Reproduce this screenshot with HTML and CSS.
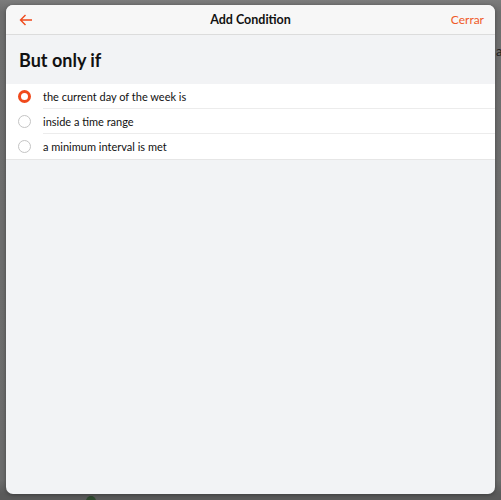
FILE: index.html
```html
<!DOCTYPE HTML>
<html>
    <head>
        <link rel="stylesheet" href="styles.css">
    </head>

    <body>
        <div class="backdrop">
            <span class="behind-text">a</span>
            <span class="behind-dot"></span>
        </div>
        <div class="modal">
            <div class="header">
                <span class="back">
                    <svg width="14" height="12" viewBox="0 0 14 12">
                        <path d="M13 6H1.5M6.5 1L1.5 6l5 5" fill="none" stroke="#f04a1c" stroke-width="1.4"/>
                    </svg>
                </span>
                <h1 class="title">Add Condition</h1>
                <span class="close">Cerrar</span>
            </div>
            <div class="content">
                <h2 class="heading">But only if</h2>
                <div class="options">
                    <div class="option">
                        <span class="radio checked"></span>
                        <span class="label">the current day of the week is</span>
                    </div>
                    <div class="option">
                        <span class="radio"></span>
                        <span class="label">inside a time range</span>
                    </div>
                    <div class="option">
                        <span class="radio"></span>
                        <span class="label">a minimum interval is met</span>
                    </div>
                </div>
            </div>
        </div>
    </body>
</html>
```

FILE: styles.css
```css
body{
    margin:0;
    height:500px;
    overflow:hidden;
    background-color:#6c6c6c;
    font-family:Lato,"Noto Sans",sans-serif;
    position:relative;
}

.backdrop{
    height:500px;
    background:linear-gradient(#7c7c7c 0px, #6e6e6e 12px, #6c6c6c 480px, #5a5a5a 494px);
}

.behind-text{
    position:absolute;
    left:496px;
    top:43px;
    font-size:13px;
    color:#222;
}

.behind-dot{
    position:absolute;
    left:86px;
    top:496px;
    width:10px;
    height:6px;
    border-radius:5px 5px 0 0;
    background:#2f4a2f;
}

.modal{
    position:absolute;
    left:6px;
    top:5px;
    width:489px;
    height:489px;
    border-radius:7px;
    overflow:hidden;
    background-color:#f2f3f5;
    box-shadow:0 1px 4px rgba(0,0,0,0.35);
    display:flex;
    flex-direction:column;
}

.header{
    height:29px;
    background-color:#f7f7f7;
    border-bottom:1px solid #dcdcdc;
    display:flex;
    align-items:center;
    justify-content:space-between;
    padding:0 11px 0 13px;
    position:relative;
}

.back{
    display:flex;
    align-items:center;
}

.title{
    position:absolute;
    left:0;
    right:0;
    margin:0;
    text-align:center;
    font-size:12.5px;
    font-weight:bold;
    color:#111;
    pointer-events:none;
}

.close{
    font-size:12px;
    color:#f05a28;
}

.content{
    flex:1;
}

.heading{
    margin:0;
    padding:14px 13px 13px;
    font-size:18px;
    font-weight:bold;
    color:#111;
}

.options{
    background-color:#fff;
    border-bottom:1px solid #e6e6e6;
}

.option{
    display:flex;
    align-items:center;
    height:25px;
    padding-left:12px;
}

.radio{
    width:11px;
    height:11px;
    border-radius:50%;
    border:1px solid #c4c4c4;
    background:#fff;
    margin-right:12px;
    flex-shrink:0;
}

.radio.checked{
    width:7px;
    height:7px;
    border:3px solid #f04a1c;
}

.label{
    flex:1;
    height:100%;
    display:flex;
    align-items:center;
    font-size:11px;
    color:#111;
    border-bottom:1px solid #ececec;
    box-sizing:border-box;
}

.option:last-child .label{
    border-bottom:none;
}
```
